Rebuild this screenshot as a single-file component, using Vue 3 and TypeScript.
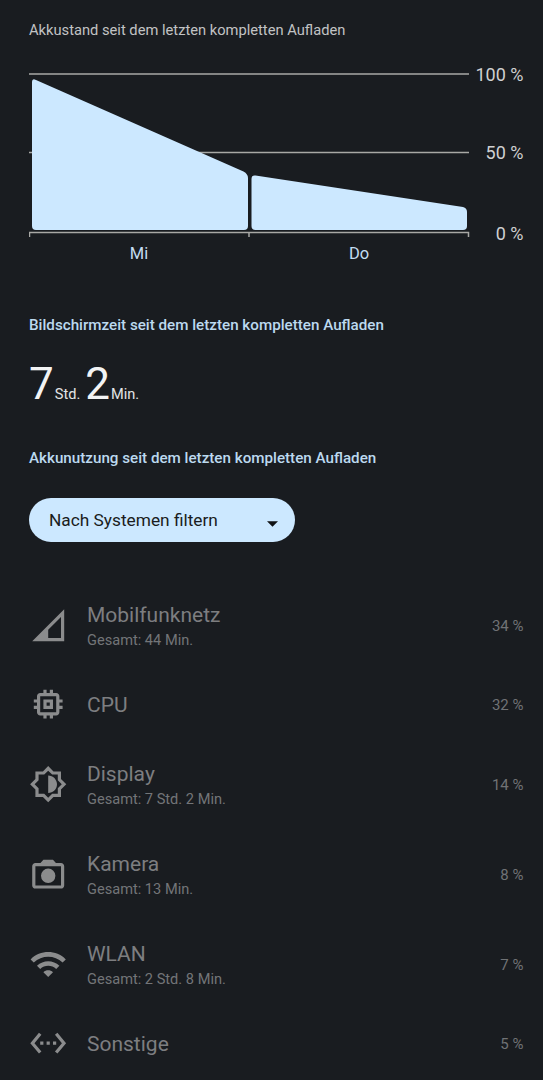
<script setup lang="ts">
interface Row {
  name: string
  sub?: string
  pct: string
  paths: string[]
}
const rows: Row[] = [
  { name: 'Mobilfunknetz', sub: 'Gesamt: 44 Min.', pct: '34 %', paths: ['M2 22h20V2L2 22zm18-2h-8v-5.17l8-8V20z'] },
  { name: 'CPU', pct: '32 %', paths: ['M15 9H9v6h6V9zm-2 4h-2v-2h2v2zm8-2V9h-2V7c0-1.1-.9-2-2-2h-2V3h-2v2h-2V3H9v2H7c-1.1 0-2 .9-2 2v2H3v2h2v2H3v2h2v2c0 1.1.9 2 2 2h2v2h2v-2h2v2h2v-2h2c1.1 0 2-.9 2-2v-2h2v-2h-2v-2h2zm-4 6H7V7h10v10z'] },
  { name: 'Display', sub: 'Gesamt: 7 Std. 2 Min.', pct: '14 %', paths: ['M20 15.31L23.31 12 20 8.69V4h-4.69L12 .69 8.69 4H4v4.69L.69 12 4 15.31V20h4.69L12 23.31 15.31 20H20v-4.69zM18 14.48V18h-3.52L12 20.48 9.52 18H6v-3.52L3.52 12 6 9.52V6h3.52L12 3.52 14.48 6H18v3.52L20.48 12 18 14.48zM12 6.5v11c3.03 0 5.5-2.47 5.5-5.5S15.03 6.5 12 6.5z'] },
  { name: 'Kamera', sub: 'Gesamt: 13 Min.', pct: '8 %', paths: ['M20 5h-3.17L15 3H9L7.17 5H4c-1.1 0-2 .9-2 2v12c0 1.1.9 2 2 2h16c1.1 0 2-.9 2-2V7c0-1.1-.9-2-2-2zm0 14H4V7h16v12z', 'M12 8.5a4.5 4.5 0 1 0 0 9a4.5 4.5 0 1 0 0-9z'] },
  { name: 'WLAN', sub: 'Gesamt: 2 Std. 8 Min.', pct: '7 %', paths: ['M1 9l2 2c4.97-4.97 13.03-4.97 18 0l2-2C16.93 2.93 7.08 2.93 1 9zm8 8l3 3 3-3c-1.65-1.66-4.34-1.66-6 0zm-4-4l2 2c2.76-2.76 7.24-2.76 10 0l2-2C15.14 9.14 8.87 9.14 5 13z'] },
  { name: 'Sonstige', pct: '5 %', paths: ['M7.77 6.76L6.23 5.48.82 12l5.41 6.52 1.54-1.28L3.42 12l4.35-5.24zM7 13h2v-2H7v2zm10-2h-2v2h2v-2zm-6 2h2v-2h-2v2zm6.77-7.52l-1.54 1.28L20.58 12l-4.35 5.24 1.54 1.28L23.18 12l-5.41-6.52z'] }
]
</script>

<template>
  <main class="page">
    <h2 class="chart-title">Akkustand seit dem letzten kompletten Aufladen</h2>

    <section class="chart">
      <svg class="plot" width="442" height="180" viewBox="29 60 442 180">
        <g class="grid">
          <path d="M29 74H469M29 152.5H469" />
          <path d="M29.5 237V232.5H468.5V237M249 232.5V237" />
        </g>
        <path class="area" d="M32 82Q32 78 36 80L243.5 171.5Q248 174 248 178V226Q248 230 244 230H36Q32 230 32 226Z" />
        <path class="area" d="M251.5 179Q251.5 175 255.5 175.6L463 207Q467 208 467 212V226Q467 230 463 230H255.500Q251.500 230 251.500 226Z" />
      </svg>
      <div class="y-labels">
        <span>100 %</span>
        <span class="mid">50 %</span>
        <span class="low">0 %</span>
      </div>
    </section>
    <div class="x-labels">
      <span>Mi</span>
      <span>Do</span>
    </div>

    <h2 class="heading screen-heading">Bildschirmzeit seit dem letzten kompletten Aufladen</h2>
    <p class="screen-time">
      <span class="big">7</span><span class="unit">Std.</span><span class="big">2</span><span class="unit">Min.</span>
    </p>

    <h2 class="heading usage-heading">Akkunutzung seit dem letzten kompletten Aufladen</h2>

    <button class="filter" type="button">
      <span>Nach Systemen filtern</span>
      <svg class="caret" width="11" height="6" viewBox="0 0 12 6"><path d="M0 0H12L6 6Z" /></svg>
    </button>

    <ul class="rows">
      <li v-for="row in rows" :key="row.name" class="row" :class="{ tall: row.sub }">
        <svg class="icon" width="38.4" height="38.4" viewBox="0 0 24 24">
          <path v-for="d in row.paths" :key="d" :d="d" />
        </svg>
        <div class="texts">
          <div class="name">{{ row.name }}</div>
          <div v-if="row.sub" class="sub">{{ row.sub }}</div>
        </div>
        <div class="pct">{{ row.pct }}</div>
      </li>
    </ul>
  </main>
</template>

<style>
html, body {
  margin: 0;
  background: #191c20;
}
</style>

<style scoped>
.page {
  box-sizing: border-box;
  width: 543px;
  height: 1080px;
  overflow: hidden;
  padding: 21px 19.5px 0 29px;
  background: #191c20;
  font-family: Roboto, "Noto Sans", sans-serif;
}
h2, p, ul {
  margin: 0;
  padding: 0;
  font-weight: 400;
}
.chart-title {
  height: 18px;
  font-size: 14.7px;
  line-height: 18px;
  color: #c2c3c4;
}
.chart {
  display: flex;
  margin-top: 21px;
  height: 180px;
}
.plot {
  display: block;
  flex: none;
}
.grid path {
  fill: none;
  stroke: #a8a8a5;
  stroke-width: 1.5;
}
.area {
  fill: #cce8ff;
}
.y-labels {
  flex: 1;
  display: flex;
  flex-direction: column;
  align-items: flex-end;
  padding: 4px 0 0;
  font-size: 18px;
  line-height: 22px;
  color: #cfd0d1;
}
.mid {
  margin-top: 56px;
}
.low {
  margin-top: 59px;
}
.x-labels {
  display: grid;
  grid-template-columns: 220px 220px;
  width: 440px;
  text-align: center;
  margin-top: 3px;
  font-size: 16.5px;
  line-height: 22px;
  color: #c3dcf0;
}
.heading {
  font-size: 15.2px;
  line-height: 18px;
  font-weight: 500;
  color: #bcd9ef;
}
.screen-heading {
  margin-top: 51px;
}
.screen-time {
  display: flex;
  align-items: baseline;
  margin-top: 25px;
  height: 50px;
  color: #f2f3f4;
}
.big {
  font-size: 44px;
  line-height: 50px;
  font-weight: 400;
  letter-spacing: -1px;
}
.unit {
  font-size: 14.6px;
  margin: 0 5px 0 2px;
  color: #e3e4e5;
}
.usage-heading {
  margin-top: 40px;
}
.filter {
  display: flex;
  align-items: center;
  justify-content: space-between;
  box-sizing: border-box;
  width: 266px;
  height: 44px;
  margin-top: 31px;
  padding: 0 17px 0 20px;
  border: 0;
  border-radius: 22px;
  background: #cce8ff;
  font: inherit;
  font-size: 17.3px;
  color: #1a1c20;
}
.caret {
  margin-top: 7px;
  fill: #101214;
}
.rows {
  list-style: none;
  margin-top: 38px;
}
.row {
  display: flex;
  align-items: center;
  height: 69px;
}
.row.tall {
  height: 90px;
}
.tall .texts {
  padding-top: 3px;
}
.tall .pct {
  padding-top: 2px;
}
.icon {
  flex: none;
  fill: #8b8c8d;
}
.texts {
  flex: 1;
  margin-left: 19.6px;
}
.name {
  font-size: 21px;
  line-height: 26px;
  color: #7d7e80;
}
.sub {
  margin-top: 1px;
  font-size: 14.6px;
  line-height: 22px;
  color: #737578;
}
.pct {
  font-size: 15px;
  color: #707275;
}
</style>
